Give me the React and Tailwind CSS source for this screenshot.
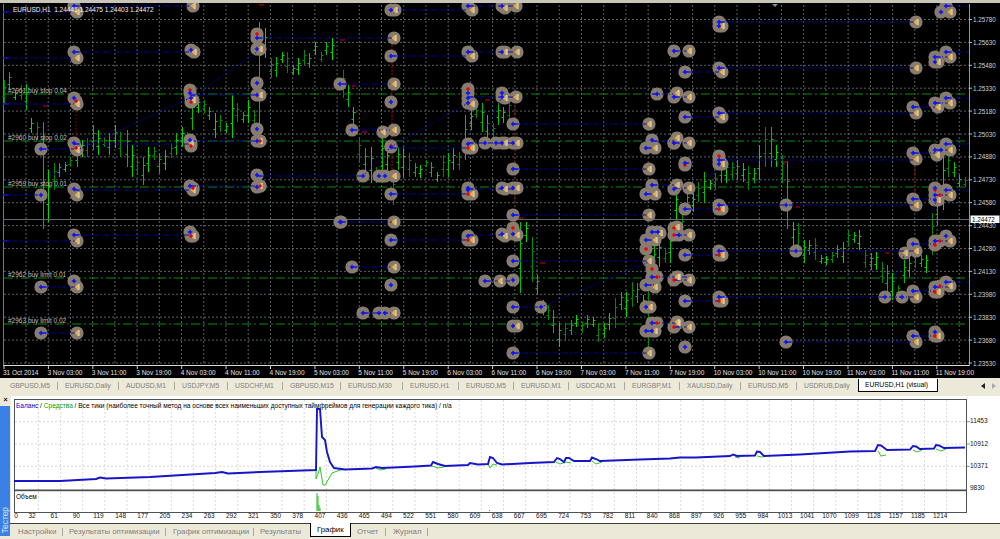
const GX = Array.from({ length: 43 }, (_, i) => 26 + 22.22 * i);
const GY = Array.from({ length: 16 }, (_, i) => 19.5 + 22.9 * i);
const PRICES = ["1.25780","1.25630","1.25480","1.25330","1.25180","1.25030","1.24880","1.24730","1.24580","1.24430","1.24280","1.24130","1.23980","1.23830","1.23680","1.23530"];
const TIMES = ["31 Oct 2014","3 Nov 03:00","3 Nov 11:00","3 Nov 19:00","4 Nov 03:00","4 Nov 11:00","4 Nov 19:00","5 Nov 03:00","5 Nov 11:00","5 Nov 19:00","6 Nov 03:00","6 Nov 11:00","6 Nov 19:00","7 Nov 03:00","7 Nov 11:00","7 Nov 19:00","10 Nov 03:00","10 Nov 11:00","10 Nov 19:00","11 Nov 03:00","11 Nov 11:00","11 Nov 19:00"];
const ORDERS = [[94,"#2961 buy stop 0.04"],[141,"#2960 buy stop 0.02"],[187,"#2959 buy stop 0.01"],[278,"#2962 buy limit 0.01"],[324,"#2963 buy limit 0.02"]];

const BARS = [[3.5,80,104],[9,72,90],[15,90,100],[21,85,100],[26,84,110],[31,118,133],[37,122,140],[42.7,122,229],[48,170,222],[54,163,190],[59,163,177],[65,162,172],[70,157,167],[77,147,167],[82,140,157],[87,138,157],[93,125,150],[98,130,155],[104,137,147],[109,133,155],[115,125,148],[120,132,157],[127,130,167],[132,145,177],[137,157,175],[143,157,185],[148,147,172],[154,147,160],[159,153,173],[165,150,170],[171,143,158],[176,133,155],[182,127,147],[187,132,140],[192,97,130],[198,97,113],[204,100,113],[209,107,120],[215,113,138],[220,115,132],[226,123,133],[232,95,138],[237,103,122],[243,112,123],[248,100,123],[254,110,125],[259,22,133],[265,28,58],[271,58,78],[276,57,77],[282,52,63],[287,52,73],[293,65,75],[298,58,75],[304,50,65],[309,53,68],[315,42,55],[321,52,62],[326,42,55],[332,38,60],[343,70,98],[348,85,107],[353,107,125],[359,137,163],[365,148,173],[371,147,183],[376,167,183],[382,133,183],[387,147,173],[393,175,205],[398,147,170],[403,147,177],[409,153,177],[415,163,177],[420,165,178],[426,160,167],[431,162,177],[437,172,182],[443,155,177],[448,153,177],[453,148,170],[459,152,170],[465,115,160],[471,110,130],[476,107,118],[482,103,132],[487,115,140],[493,123,140],[498,103,125],[503,107,123],[509,97,125],[520,222,293],[526,222,242],[532,237,282],[537,275,295],[543,300,315],[548,305,320],[553,310,333],[559,323,347],[565,323,340],[571,320,335],[576,315,327],[582,322,333],[587,315,328],[593,317,327],[598,323,342],[604,323,338],[609,313,330],[615,298,328],[621,292,310],[626,292,317],[632,282,307],[637,283,303],[643,295,310],[648,263,347],[654,240,285],[659,238,267],[665,248,263],[670,232,263],[676,190,220],[682,213,238],[687,190,213],[693,193,212],[698,182,202],[704,172,203],[710,180,190],[715,173,190],[721,160,183],[726,160,183],[732,162,180],[737,160,180],[743,163,182],[748,166,190],[754,168,183],[759,145,180],[765,127,167],[771,127,167],[776,145,167],[782,155,183],[787,161,229],[793,222,245],[798,223,255],[804,240,263],[809,240,255],[815,238,260],[821,255,264],[826,256,265],[832,252,263],[837,245,258],[843,242,263],[848,230,247],[854,232,243],[859,230,250],[865,250,268],[871,253,270],[876,252,270],[882,262,283],[887,265,292],[892,273,300],[898,285,295],[904,260,283],[909,257,277],[915,247,268],[921,255,267],[926,255,273],[932,213,255],[937,193,225],[943,153,210],[948,152,177],[954,162,177],[959,175,187],[965,177,187]];

const LINES = [[3,12,73],[74,6,190],[74,52,190],[3,58,73],[257,38,394],[190,95,257],[3,104,74],[190,141,257],[74,144,190],[41,149,74],[74,190,190],[190,186,257],[257,176,363],[3,195,41],[3,241,77],[74,235,190],[41,287,77],[41,333,77],[340,222,394],[391,10,468],[468,6,516],[391,56,468],[468,52,517],[342,84,394],[468,97,516],[352,130,394],[513,124,649],[391,148,468],[468,143,517],[513,169,649],[391,194,468],[468,189,513],[391,240,468],[468,235,502],[513,215,649],[352,267,394],[513,261,649],[485,281,513],[363,313,394],[513,307,541],[513,353,649],[674,51,689],[719,22,916],[946,6,969],[685,72,719],[719,68,916],[946,52,969],[935,57,950],[674,97,689],[685,117,719],[719,113,916],[913,107,935],[946,98,969],[935,103,950],[652,94,673],[674,143,689],[652,141,674],[719,160,913],[913,153,935],[946,144,969],[935,150,950],[685,163,689],[674,188,689],[652,185,674],[719,205,916],[685,209,719],[646,194,655],[913,199,935],[946,190,969],[935,195,950],[685,255,719],[719,251,916],[913,244,935],[935,241,950],[685,301,719],[719,297,916],[913,291,935],[946,282,969],[935,287,950],[786,342,916],[913,336,935],[652,277,689],[646,285,655],[646,240,655],[652,232,658],[674,235,689],[652,323,678],[646,331,655],[646,148,655],[646,307,650],[674,327,689],[674,280,689],[513,326,517]];
const DIAG = [[77,150,190,98],[191,98,257,52],[54,175,74,155],[391,147,468,103],[363,176,391,147],[485,130,502,97],[541,307,649,262],[893,283,905,253],[927,220,937,200],[703,182,717,170]];

const BLUE = [[74,6],[74,52],[191,50],[257,38],[257,49],[257,83],[257,95],[257,129],[257,141],[257,175],[257,187],[190,93],[191,98],[74,98],[74,143],[41,149],[190,140],[41,195],[74,189],[190,186],[340,84],[340,222],[74,235],[190,232],[74,281],[41,287],[41,333],[391,10],[468,6],[502,6],[391,56],[468,52],[502,52],[674,51],[391,102],[468,93],[468,98],[468,103],[502,93],[502,97],[657,94],[674,97],[352,130],[513,124],[391,147],[468,144],[485,143],[496,143],[502,143],[513,143],[652,140],[646,148],[674,143],[363,176],[379,176],[385,176],[513,169],[468,188],[502,188],[513,188],[652,185],[391,194],[468,190],[646,194],[674,189],[341,222],[513,215],[391,240],[468,236],[502,234],[513,234],[652,232],[658,232],[646,240],[679,235],[352,267],[513,261],[652,277],[485,281],[513,280],[391,285],[646,285],[363,313],[379,313],[385,313],[513,307],[541,307],[646,307],[513,326],[652,323],[646,331],[652,331],[513,353],[719,22],[719,26],[946,6],[941,12],[685,72],[719,68],[946,52],[935,57],[935,62],[719,113],[913,107],[946,98],[935,103],[685,117],[685,163],[719,160],[719,164],[913,153],[946,144],[935,150],[941,150],[935,188],[946,190],[685,209],[719,205],[786,205],[913,199],[935,195],[935,200],[685,255],[719,251],[796,251],[913,244],[935,241],[946,236],[685,301],[719,297],[885,297],[902,297],[913,291],[935,287],[946,282],[685,347],[786,342],[913,336],[935,332]];
const RED = [[257,34],[190,90],[191,102],[76,101],[76,148],[191,146],[193,188],[260,186],[191,236],[468,194],[468,89],[391,146],[468,148],[468,240],[513,228],[646,249],[674,228],[674,235],[652,269],[657,277],[674,280],[657,323],[674,327],[719,156],[719,209],[935,190],[940,195],[719,255],[935,245],[940,241],[719,301],[940,286],[935,292],[674,143],[685,165],[935,336],[260,141]];
const ORANGE = [[77,12],[193,6],[77,58],[194,52],[260,49],[260,95],[193,100],[77,104],[77,150],[191,143],[260,141],[77,195],[193,190],[260,186],[77,241],[193,236],[77,287],[77,333],[394,38],[395,10],[472,10],[505,8],[516,6],[472,56],[505,52],[517,52],[394,84],[472,104],[505,98],[516,97],[383,132],[394,130],[649,124],[472,148],[505,143],[517,143],[655,148],[394,176],[649,169],[472,194],[505,189],[517,188],[655,194],[394,222],[649,215],[472,240],[505,236],[517,235],[655,240],[394,267],[649,261],[500,281],[655,287],[394,313],[650,307],[517,326],[678,323],[655,331],[649,353],[678,277],[689,51],[722,26],[916,22],[950,12],[722,72],[916,68],[938,62],[950,57],[677,93],[689,97],[722,117],[916,113],[938,107],[950,103],[677,138],[689,143],[722,164],[916,159],[950,150],[937,155],[677,185],[689,188],[722,209],[916,205],[950,195],[938,200],[660,233],[677,227],[689,235],[722,255],[905,253],[916,251],[950,241],[677,277],[689,280],[722,301],[916,297],[938,292],[950,286],[677,322],[689,327],[916,342],[938,336]];

const SHORT_RED = [[259,5,264],[43,106,48],[340,40,345],[352,86,356],[362,132,367],[485,100,490],[540,263,545],[519,218,523],[796,207,800],[885,253,889],[783,162,788],[76,101,80],[391,104,396]];
const TABS = [
  ["GBPUSD,M5","w-[55px]"],["EURUSD,Daily","w-[61px]"],["AUDUSD,M1","w-[56px]"],["USDJPY,M5","w-[53px]"],["USDCHF,M1","w-[55px]"],["GBPUSD,M15","w-[58px]"],["EURUSD,M30","w-[62px]"],["EURUSD,H1","w-[56px]"],["EURUSD,M5","w-[55px]"],["EURUSD,M1","w-[55px]"],["USDCAD,M1","w-[56px]"],["EURGBP,M1","w-[55px]"],["XAUUSD,Daily","w-[61px]"],["EURUSD,M5","w-[56px]"],["USDRUB,Daily","w-[61px]"],
];
const BOTTOM = [["Настройки","w-[53px] pl-[8px]"],["Результаты оптимизации","w-[103px] pl-[6px]"],["График оптимизации","w-[88px] pl-[7px]"],["Результаты","w-[56px] pl-[6px]"]];
const XLABELS = ["32","61","90","119","148","177","205","234","263","292","321","350","378","407","436","465","494","522","551","580","609","638","667","695","724","753","782","811","840","868","897","926","955","984","1013","1041","1070","1099","1128","1157","1185","1214"];
const YLABELS = [["11453",423],["10912",445.5],["10371",467.5],["9830",489.5]];

const BLUE_CURVE = "14,481 60,481 96,479 100,477.5 106,478.5 150,477 215,473 222,472 228,473.5 260,472 316,470 317,409 320,409 322,437 325,440 327,452 330,462 334,468 345,469.5 372,468.5 376,467 382,468 415,466.5 431,465.5 433,462 438,464 445,466 468,465 470,463 478,464.5 488,464 490,457 493,458 497,463 502,464.5 530,463 554,462 557,458 560,459 564,462 566,458 569,458 574,461 590,461 592,457.5 596,459 600,461 640,459.5 670,458.5 680,457.5 696,457.5 730,456 733,454.5 737,456 755,455.5 757,451.5 760,452 764,456 800,454.5 850,451.5 875,451 878,445 881,445.5 887,450 910,449.5 913,446 916,446.5 920,449 934,448.5 936,445 939,445.5 944,448 965,447.5";
const GREEN_CURVE = "316,470 316,479 318,474 320,467 321,473 323,485 325,485 328,480 332,473 340,470 345,469.5";
const GREEN_BUMPS = ["376,468 380,470 386,469","432,466 438,468 444,467","488,464 490,468 493,464 497,465","556,462 560,464 566,462 571,463","592,461 596,464 602,462","735,457 740,458","757,456 762,457 767,456","878,451 881,456 886,455","913,450 917,452 922,450","936,449 941,451 946,449"];

function OrderLabel({ y, text }) {
  return <text x="8" y={y - 1} fill="#bdbdbd" fontSize="6.5">{text}</text>;
}

function Chart() {
  return (
    <svg viewBox="0 3 1000 375" width="1000" height="375" className="block font-['Liberation_Sans',sans-serif]">
      <rect x="0" y="3" width="1000" height="375" fill="#000" />
      {GX.map((x) => <line key={x} x1={x} x2={x} y1="5" y2="365" stroke="#6f7880" strokeWidth="0.8" strokeDasharray="2 2" />)}
      {GY.map((y) => <line key={y} x1="4" x2="969" y1={y} y2={y} stroke="#6f7880" strokeWidth="0.8" strokeDasharray="2 2" />)}
      <line x1="3.5" x2="3.5" y1="4" y2="366" stroke="#777" strokeWidth="1" />
      <line x1="3" x2="969.5" y1="365.5" y2="365.5" stroke="#d8d8d8" strokeWidth="1" />
      <line x1="969.5" x2="969.5" y1="4" y2="366" stroke="#9a9a9a" strokeWidth="1" />
      {ORDERS.map(([y]) => <line key={y} x1="4" x2="965" y1={y} y2={y} stroke="#0b8a0b" strokeWidth="1" strokeDasharray="9 3 2 3" />)}
      {BARS.map(([x0, a, b], i) => {
        const x = Math.round(x0) + 0.5;
        const c = i % 3 === 0 ? "#008a00" : i % 3 === 1 ? "#00c000" : "#00d800";
        const t1 = Math.round(a + (b - a) * 0.3) + 0.5;
        const t2 = Math.round(a + (b - a) * 0.65) + 0.5;
        return (
          <g key={x0} stroke={c} strokeWidth="1">
            <line x1={x} x2={x} y1={a} y2={b} />
            <line x1={x - 2} x2={x} y1={t2} y2={t2} />
            <line x1={x} x2={x + 2} y1={t1} y2={t1} />
          </g>
        );
      })}
      <line x1="3" x2="969" y1="219.5" y2="219.5" stroke="#5f6b72" strokeWidth="1" />
      {[[76,107,143,"#8a0000"],[392,38,176,"#c00000"],[515,97,215,"#800000"],[515,220,240,"#800000"],[915,160,200,"#8a0000"]].map(([x,a,b,c]) => (
        <line key={x + "-" + a} x1={x} x2={x} y1={a} y2={b} stroke={c} strokeWidth="1" strokeDasharray="2 1.5" />
      ))}
      {SHORT_RED.map(([x, y, e]) => <line key={x + "r" + y} x1={x} x2={e} y1={y} y2={y} stroke="#d80000" strokeWidth="1" />)}
      {[...BLUE, ...RED, ...ORANGE].map(([x, y], i) => <circle key={i} cx={x} cy={y} r="6.6" fill="#877c6d" />)}
      {DIAG.map(([a, b, c, d], i) => <line key={i} x1={a} y1={b} x2={c} y2={d} stroke="#0000a8" strokeWidth="0.9" strokeDasharray="1.5 1.5" />)}
      {LINES.map(([a, y, b], i) => (
        <g key={i}>
          <line x1={a} x2={b} y1={y} y2={y} stroke="#0000b0" strokeWidth="0.9" strokeDasharray="5 2 1 2" />
          <line x1={a} x2={Math.min(a + 6, b)} y1={y} y2={y} stroke="#1414ff" strokeWidth="1" />
        </g>
      ))}
      {ORANGE.map(([x, y], i) => (
        <g key={i}>
          <path d={`M${x - 2.6} ${y}L${x + 1.4} ${y - 3.6}V${y + 3.6}Z`} fill="#e9ae45" />
          <rect x={x + 1.4} y={y - 3} width="1.1" height="6" fill="#f3e6c8" />
        </g>
      ))}
      {RED.map(([x, y], i) => (
        <g key={i} stroke="#f00000" strokeWidth="1" fill="#f00000">
          <line x1={x - 2} x2={x + 2} y1={y} y2={y} />
          <line x1={x} x2={x} y1={y - 2} y2={y + 2} />
          <circle cx={x} cy={y} r="1" />
        </g>
      ))}
      {BLUE.map(([x, y], i) => (
        <g key={i} stroke="#0a14ff" strokeWidth="1" fill="#0a14ff">
          <line x1={x - 2.3} x2={x + 2.3} y1={y} y2={y} />
          <line x1={x} x2={x} y1={y - 2.3} y2={y + 2.3} />
          <circle cx={x} cy={y} r="1.2" />
        </g>
      ))}
      <path d="M772 4H778L775 7Z" fill="#7f8ea0" />
      {ORDERS.map(([y, t]) => <OrderLabel key={y} y={y} text={t} />)}
      <text x="13" y="11.5" fill="#f2f2f2" fontSize="6.5" xmlSpace="preserve">EURUSD,H1  1.24441 1.24475 1.24403 1.24472</text>
      {GY.map((y, i) => (
        <g key={y}>
          <line x1="969" x2="972" y1={y} y2={y} stroke="#bbb" strokeWidth="1" />
          <text x="973" y={y + 2.5} fill="#cfcfcf" fontSize="6.3">{PRICES[i]}</text>
        </g>
      ))}
      {TIMES.map((t, i) => {
        const x = 3 + 44.42 * i;
        return (
          <g key={t}>
            <line x1={x + 1} x2={x + 1} y1="365" y2="369" stroke="#ccc" strokeWidth="1" />
            <text x={x} y="374.5" fill="#e0e0e0" fontSize="6.5">{t}</text>
          </g>
        );
      })}
      <rect x="970.5" y="215.5" width="29" height="7.5" fill="#fff" />
      <text x="972" y="222" fill="#000" fontSize="6.3">1.24472</text>
    </svg>
  );
}

function TabBar() {
  return (
    <div className="flex h-[15px] bg-[#ece9d8] pl-[3px] pt-[1px] font-['Liberation_Sans',sans-serif] text-[6.8px]">
      {TABS.map(([t, w], i) => (
        <div key={t + i} className={`${w} flex items-center pl-[7px] text-[#808080]`}>
          <span className="flex-1 whitespace-nowrap">{t}</span>
          {i < TABS.length - 1 && <span className="h-[8px] w-px bg-[#aca899]" />}
        </div>
      ))}
      <div className="flex h-[13px] w-[80px] items-center border border-t-0 border-black bg-white pl-[6px] text-black">EURUSD,H1 (visual)</div>
      <div className="ml-auto flex items-center gap-[7px] pr-[4px]">
        <span className="h-0 w-0 border-y-[3px] border-r-[4px] border-y-transparent border-r-[#222]" />
        <span className="h-0 w-0 border-y-[3px] border-l-[4px] border-y-transparent border-l-[#aaa]" />
      </div>
    </div>
  );
}

function Graph() {
  const vLines = Array.from({ length: 42 }, (_, i) => 38.4 + 22.15 * i);
  return (
    <svg viewBox="11 396 989 127" width="989" height="127" className="block font-['Liberation_Sans',sans-serif]">
      <rect x="11" y="396" width="989" height="127" fill="#fff" />
      {vLines.map((x) => <line key={x} x1={x} x2={x} y1="400" y2="512" stroke="#cfcfcf" strokeWidth="0.8" strokeDasharray="2 2" />)}
      {[421.7, 444, 466.3].map((y) => <line key={y} x1="15" x2="967" y1={y} y2={y} stroke="#cfcfcf" strokeWidth="0.8" strokeDasharray="2 2" />)}
      <rect x="14.5" y="399.5" width="952" height="113" fill="none" stroke="#4d5358" strokeWidth="1" />
      <rect x="14" y="489.5" width="953" height="1.7" fill="#4a4a4a" />
      <line x1="967" x2="970" y1="421.7" y2="421.7" stroke="#777" strokeWidth="0.8" />
      <line x1="967" x2="970" y1="444" y2="444" stroke="#777" strokeWidth="0.8" />
      <line x1="967" x2="970" y1="466.3" y2="466.3" stroke="#777" strokeWidth="0.8" />
      <polyline points={GREEN_CURVE} fill="none" stroke="#2cc92c" strokeWidth="1" />
      {GREEN_BUMPS.map((p) => <polyline key={p} points={p} fill="none" stroke="#2cc92c" strokeWidth="1" />)}
      <polyline points={BLUE_CURVE} fill="none" stroke="#1616c8" strokeWidth="1.9" />
      <text x="16" y="407.5" fontSize="6.55" fill="#000">
        <tspan fill="#0000c8">Баланс</tspan>
        <tspan> / </tspan>
        <tspan fill="#00a000">Средства</tspan>
        <tspan> / Все тики (наиболее точный метод на основе всех наименьших доступных таймфреймов для генерации каждого тика) / n/a</tspan>
      </text>
      <text x="16" y="499" fontSize="6.5" fill="#000">Объем</text>
      <path d="M317 493V511M318 496V511M319 505V511M320 508V511" stroke="#1dbb1d" strokeWidth="1" />
      <rect x="489" y="510" width="1" height="1" fill="#1dbb1d" />
      {YLABELS.map(([t, y]) => <text key={t} x="970" y={y} fontSize="6.5" fill="#111">{t}</text>)}
      <text x="16" y="518" textAnchor="middle" fontSize="6.5" fill="#111">0</text>
      {XLABELS.map((t, i) => <text key={t} x={32 + 22.15 * i} y="518" textAnchor="middle" fontSize="6.5" fill="#111">{t}</text>)}
    </svg>
  );
}

function BottomTabs() {
  return (
    <div className="flex h-[16px] border-t border-[#3c3c3c] bg-[#ece9d8] font-['Liberation_Sans',sans-serif] text-[7.8px]">
      {BOTTOM.map(([t, c]) => (
        <div key={t} className={`${c} flex items-center text-[#808080]`}>
          <span className="flex-1 whitespace-nowrap">{t}</span>
          {t !== "Результаты" && <span className="h-[8px] w-px bg-[#aca899]" />}
        </div>
      ))}
      <div className="mt-[-1px] flex h-[14px] w-[41px] items-center border-x border-b border-black bg-white pl-[6px] text-black">График</div>
      <div className="flex w-[35px] items-center pl-[6px] text-[#808080]"><span className="flex-1">Отчет</span><span className="h-[8px] w-px bg-[#aca899]" /></div>
      <div className="flex w-[42px] items-center pl-[7px] text-[#808080]"><span className="flex-1">Журнал</span><span className="h-[8px] w-px bg-[#aca899]" /></div>
    </div>
  );
}

export default function App() {
  return (
    <div className="flex h-[539px] w-[1000px] flex-col overflow-hidden bg-[#ece9d8]">
      <div className="h-[3px] bg-[#c9c6b8]" />
      <Chart />
      <TabBar />
      <div className="flex min-h-0 flex-1 flex-col pt-[3px]">
        <div className="flex flex-1">
          <div className="flex w-[11px] flex-col items-center">
            <span className="h-[10px] font-['Liberation_Sans',sans-serif] text-[7px] font-bold leading-[8px] text-black">×</span>
            <div className="mr-px mb-[3px] flex w-[10px] flex-1 items-end justify-center bg-[#3b80e4] pb-[2px]">
              <span className="rotate-180 font-['Liberation_Sans',sans-serif] text-[8.4px] leading-[10px] text-[#d6e6ff] [writing-mode:vertical-rl]">Тестер</span>
            </div>
          </div>
          <div className="flex flex-1 flex-col">
            <Graph />
            <div className="-ml-px"><BottomTabs /></div>
          </div>
        </div>
      </div>
    </div>
  );
}
